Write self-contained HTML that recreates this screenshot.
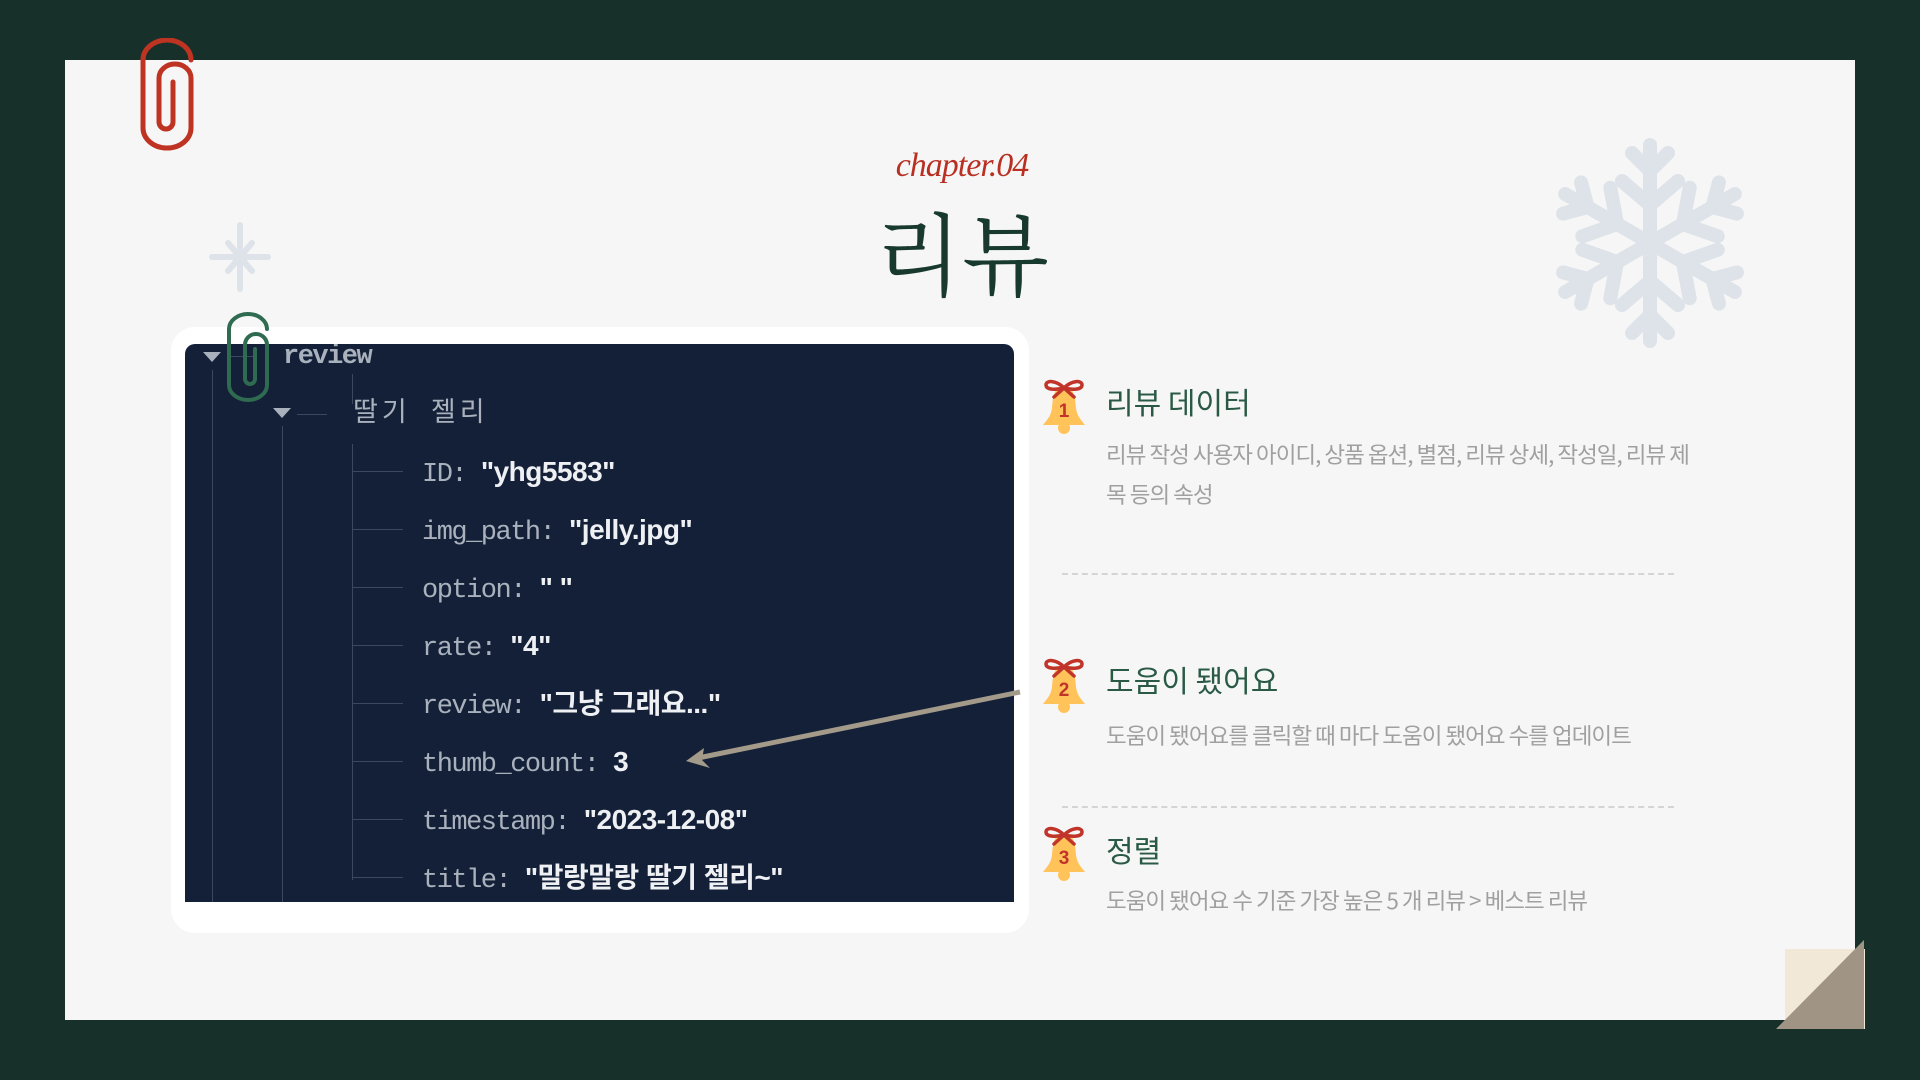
<!DOCTYPE html>
<html><head><meta charset="utf-8"><style>
*{margin:0;padding:0;box-sizing:border-box}
body{width:1920px;height:1080px;background:#17312a;position:relative;overflow:hidden;font-family:"Liberation Sans","Noto Sans CJK KR",sans-serif}
.card{position:absolute;left:65px;top:60px;width:1790px;height:960px;background:#f6f6f6}
.abs{position:absolute}
.chap{left:0;width:1924px;top:147px;text-align:center;font-family:"Liberation Serif",serif;font-style:italic;font-size:34px;color:#b92f22;letter-spacing:-1px}
.title{left:0;width:1924px;top:200px;text-align:center;font-family:"Noto Serif CJK SC","Noto Sans CJK KR",serif;font-size:90px;color:#183a2e;line-height:1.1}
.wp{left:171px;top:327px;width:858px;height:606px;background:#fff;border-radius:24px}
.dp{left:185px;top:344px;width:829px;height:558px;background:#132037;border-radius:10px 10px 0 0;overflow:hidden}
.k{position:absolute;font-family:"Liberation Mono","Noto Sans CJK KR",monospace;font-size:27px;color:#a9b1bd;white-space:nowrap;line-height:1;letter-spacing:-1.5px}
.k b{font-family:"Liberation Sans","Noto Sans CJK KR",sans-serif;color:#eef0f4;font-weight:bold;font-size:28px;letter-spacing:-0.5px}
.vl{position:absolute;width:1px;background:#3b4860}
.hl{position:absolute;height:1px;background:#3b4860;width:50px}
.h{position:absolute;left:1106px;font-size:30px;color:#2a5a45;font-family:"Noto Sans CJK KR",sans-serif;line-height:1}
.d{position:absolute;left:1106px;font-size:22.5px;color:#a0a0a0;font-family:"Noto Sans CJK KR",sans-serif;letter-spacing:-1px;line-height:40px}
.dash{position:absolute;left:1062px;width:612px;border-top:2px dashed #d4d4d4}
</style></head><body>
<div class="card"></div>
<svg class="abs" style="left:138px;top:38px" width="58" height="116" viewBox="0 0 58 116"><path d="M53 22 A24 20 0 0 0 5 22 L5 90 A24 20 0 0 0 53 90 L53 40 A16 14 0 0 0 21 40 L21 84 A7 7 0 0 0 35 84 L35 44" fill="none" stroke="#bf3322" stroke-width="5" stroke-linecap="round"/></svg>
<div class="abs chap">chapter.04</div>
<div class="abs title">리뷰</div>
<svg class="abs" style="left:205px;top:222px" width="70" height="70" viewBox="-35 -35 70 70"><g stroke="#dde3e9" stroke-width="6" stroke-linecap="round"><line x1="0" y1="-32" x2="0" y2="32"/><line x1="-28" y1="0" x2="28" y2="0"/><line x1="-12" y1="-14" x2="12" y2="14"/><line x1="12" y1="-14" x2="-12" y2="14"/></g></svg>
<svg class="abs" style="left:1545px;top:138px" width="210" height="210" viewBox="-105 -105 210 210"><g stroke="#dde3e8" stroke-width="14" stroke-linecap="round" fill="none">
<g id="a"><line x1="0" y1="0" x2="0" y2="-98"/><path d="M-28 -62 L0 -38 L28 -62 M-18 -90 L0 -72 L18 -90"/></g>
<use href="#a" transform="rotate(60)"/><use href="#a" transform="rotate(120)"/><use href="#a" transform="rotate(180)"/><use href="#a" transform="rotate(240)"/><use href="#a" transform="rotate(300)"/></g></svg>
<div class="abs wp"></div>
<div class="abs dp">
<svg class="abs" style="left:18px;top:8px" width="20" height="12"><path d="M0 0 L18 0 L9 10Z" fill="#a9b1bd"/></svg>
<svg class="abs" style="left:88px;top:64px" width="20" height="12"><path d="M0 0 L18 0 L9 10Z" fill="#a9b1bd"/></svg>
<div class="vl" style="left:27px;top:26px;height:540px"></div>
<div class="vl" style="left:97px;top:82px;height:480px"></div>
<div class="vl" style="left:167px;top:30px;height:30px"></div>
<div class="vl" style="left:167px;top:100px;height:436px"></div>
<div class="hl" style="left:112px;top:70px;width:30px"></div>
<div class="hl" style="left:42px;top:12px;width:30px"></div>
<div class="k" style="left:98px;top:0px;font-weight:bold">review</div>
<div class="k" style="left:168px;top:58px;letter-spacing:4px">딸기 젤리</div>
<div class="hl" style="left:168px;top:127px"></div><div class="k" style="left:237px;top:114px">ID: <b>"yhg5583"</b></div>
<div class="hl" style="left:168px;top:185px"></div><div class="k" style="left:237px;top:172px">img_path: <b>"jelly.jpg"</b></div>
<div class="hl" style="left:168px;top:243px"></div><div class="k" style="left:237px;top:230px">option: <b>" "</b></div>
<div class="hl" style="left:168px;top:301px"></div><div class="k" style="left:237px;top:288px">rate: <b>"4"</b></div>
<div class="hl" style="left:168px;top:359px"></div><div class="k" style="left:237px;top:346px">review: <b>"그냥 그래요..."</b></div>
<div class="hl" style="left:168px;top:417px"></div><div class="k" style="left:237px;top:404px">thumb_count: <b>3</b></div>
<div class="hl" style="left:168px;top:475px"></div><div class="k" style="left:237px;top:462px">timestamp: <b>"2023-12-08"</b></div>
<div class="hl" style="left:168px;top:533px"></div><div class="k" style="left:237px;top:520px">title: <b>"말랑말랑 딸기 젤리~"</b></div>
</div>
<svg class="abs" style="left:225px;top:311px" width="46" height="92" viewBox="0 0 46 92"><path d="M42 18 A19 15 0 0 0 4 18 L4 74 A19 15 0 0 0 42 74 L42 34 A11 11 0 0 0 20 34 L20 68 A5 5 0 0 0 30 68 L30 38" fill="none" stroke="#2f6b50" stroke-width="4" stroke-linecap="round"/></svg>
<svg class="abs" style="left:680px;top:680px" width="345" height="90"><line x1="340" y1="12" x2="18" y2="78" stroke="#a39a8a" stroke-width="5"/><path d="M6 81 L24 68 L22 80 L30 88Z" fill="#a39a8a"/></svg>
<svg width="0" height="0" style="position:absolute"><defs><g id="bell"><path d="M22 9 C12 9 11 18 10 30 C9 38 5 42 1 47 L43 47 C39 42 35 38 34 30 C33 18 32 9 22 9Z" fill="#ffc35a"/><circle cx="22" cy="50" r="6" fill="#ffc35a"/><g stroke="#c0342a" stroke-width="3.5" fill="none" stroke-linecap="round"><path d="M22 10 C14 2 4 2 4 7 C4 12 14 12 22 10 C30 12 40 12 40 7 C40 2 30 2 22 10 M22 10 L12 19 M22 10 L32 19"/></g></g></defs></svg>
<svg class="abs" style="left:1042px;top:378px" width="46" height="60"><use href="#bell"/><text x="22" y="39" text-anchor="middle" font-family="Liberation Sans" font-weight="bold" font-size="19" fill="#c0342a">1</text></svg>
<svg class="abs" style="left:1042px;top:657px" width="46" height="60"><use href="#bell"/><text x="22" y="39" text-anchor="middle" font-family="Liberation Sans" font-weight="bold" font-size="19" fill="#c0342a">2</text></svg>
<svg class="abs" style="left:1042px;top:825px" width="46" height="60"><use href="#bell"/><text x="22" y="39" text-anchor="middle" font-family="Liberation Sans" font-weight="bold" font-size="19" fill="#c0342a">3</text></svg>
<div class="h" style="top:386px">리뷰 데이터</div>
<div class="d" style="top:434px">리뷰 작성 사용자 아이디, 상품 옵션, 별점, 리뷰 상세,  작성일, 리뷰 제<br>목 등의 속성</div>
<div class="dash" style="top:573px"></div>
<div class="h" style="top:664px">도움이 됐어요</div>
<div class="d" style="top:715px">도움이 됐어요를 클릭할 때 마다 도움이 됐어요 수를 업데이트</div>
<div class="dash" style="top:806px"></div>
<div class="h" style="top:834px">정렬</div>
<div class="d" style="top:880px">도움이 됐어요 수 기준 가장 높은 5 개 리뷰 &gt; 베스트 리뷰</div>
<div class="abs" style="left:1785px;top:949px;width:80px;height:80px;background:#f2e8d8"></div>
<svg class="abs" style="left:1776px;top:940px" width="90" height="90"><path d="M88 0 L88 89 L0 89Z" fill="#a09585"/></svg>
</body></html>
